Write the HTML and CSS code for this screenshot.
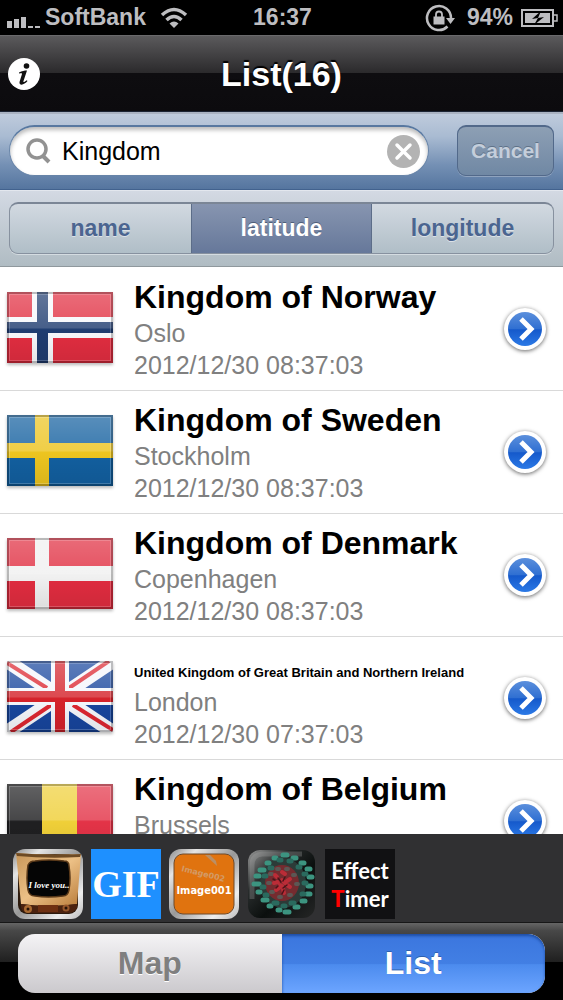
FILE: index.html
```html
<!DOCTYPE html>
<html lang="en">
<head>
<meta charset="utf-8">
<meta name="viewport" content="width=device-width, initial-scale=1">
<title>List(16)</title>
<link rel="stylesheet" href="styles.css">
</head>
<body>
<svg class="defs" width="0" height="0" aria-hidden="true">
  <defs>
    <linearGradient id="gloss" x1="0" y1="0" x2="0" y2="1">
      <stop offset="0" stop-color="#fff" stop-opacity=".3"/>
      <stop offset=".5" stop-color="#fff" stop-opacity=".18"/>
      <stop offset=".53" stop-color="#fff" stop-opacity="0"/>
      <stop offset=".54" stop-color="#000" stop-opacity="0"/>
      <stop offset="1" stop-color="#000" stop-opacity=".08"/>
    </linearGradient>
    <g id="flag-shine">
      <rect width="106" height="71" fill="url(#gloss)"/>
      <rect x="2.500" y="2.500" width="101" height="66" fill="none" stroke="#fff" stroke-opacity=".2"/>
      <rect x="1" y="1" width="104" height="69" fill="none" stroke="#000" stroke-opacity=".24" stroke-width="2"/>
    </g>
    <linearGradient id="blue" x1="0" y1="0" x2="0" y2="1">
      <stop offset="0" stop-color="#5b8fdc"/>
      <stop offset=".5" stop-color="#2f6fd2"/>
      <stop offset=".52" stop-color="#1559cb"/>
      <stop offset="1" stop-color="#2b79e6"/>
    </linearGradient>
    <g id="disclosure">
      <circle cx="24" cy="24" r="21" fill="#fff"/>
      <circle cx="24" cy="24" r="17" fill="url(#blue)"/>
      <path d="M20 14l10 10-10 10" fill="none" stroke="#fff" stroke-width="5"/>
    </g>
  </defs>
</svg>

<header>
  <div class="status">
    <div class="status-side">
      <svg width="34" height="12" viewBox="0 0 34 12" fill="#bdbdc0" aria-hidden="true"><path d="M0 5h5v7H0zM7 3h5v9H7zM14 1h5v11h-5zM21 10h5v2h-5zM28 10h5v2h-5z"/></svg>
      <span>SoftBank</span>
      <svg class="wifi" width="28" height="21" viewBox="0 0 28 21" aria-hidden="true"><g fill="none" stroke="#bdbdc0" stroke-width="3.500"><path d="M2 8q12-11 24 0"/><path d="M6.500 13q7.500-7 15 0"/></g><path d="M9.500 16.500q4.500-4 9 0L14 21z" fill="#bdbdc0"/></svg>
    </div>
    <time>16:37</time>
    <div class="status-side status-end">
      <svg width="30" height="28" viewBox="0 0 30 28" aria-hidden="true"><path d="M22.500 22.500A12 12 0 1 1 26 14" fill="none" stroke="#bdbdc0" stroke-width="2.500"/><path d="M21 14h9l-4.500 6z" fill="#bdbdc0"/><path d="M8.500 12.500h11v8h-11z" fill="#bdbdc0"/><path d="M11 13v-2.500a3 3 0 0 1 6 0V13" fill="none" stroke="#bdbdc0" stroke-width="1.800"/></svg>
      <span>94%</span>
      <svg width="37" height="18" viewBox="0 0 37 18" aria-hidden="true"><rect x="1" y="1" width="31" height="16" fill="none" stroke="#bdbdc0" stroke-width="2"/><path d="M33 6h3v6h-3" fill="none" stroke="#bdbdc0" stroke-width="1.500"/><path d="M4 4h25v10H4z" fill="#bdbdc0"/><path d="M20 2l-9 8 6-1-4 7 10-8-6 1z" fill="#000"/></svg>
    </div>
  </div>
  <div class="navbar">
    <button class="info" aria-label="Info"><svg width="32" height="32" viewBox="0 0 32 32"><circle cx="16" cy="16" r="16" fill="#fff"/><circle cx="18.500" cy="8" r="2.800" fill="#111"/><path d="M11 14.500c3-1.500 5.500-2 8-2l-3.500 10.500c-.5 1.500.7 1.600 3.200-.7l.8.800c-3 4-8.500 5-8 1l2.500-8c.3-1.200-1-1-3-.5z" fill="#111"/></svg></button>
    <h1>List(16)</h1>
  </div>
  <form class="searchbar">
    <div class="search-field">
      <svg width="25" height="26" viewBox="0 0 25 26" aria-hidden="true"><circle cx="11" cy="11" r="9" fill="none" stroke="#929292" stroke-width="3.500"/><path d="M17 18l6 6" stroke="#929292" stroke-width="4"/></svg>
      <input type="text" value="Kingdom" aria-label="Search">
      <button class="clear" type="button" aria-label="Clear"><svg width="33" height="33" viewBox="0 0 33 33"><circle cx="16.500" cy="16.500" r="16.500" fill="#b3b3b3"/><path d="M10 10l13 13M23 10L10 23" stroke="#fff" stroke-width="3.500" stroke-linecap="round"/></svg></button>
    </div>
    <button class="cancel" type="button">Cancel</button>
  </form>
  <div class="scopebar">
    <div class="scopes">
      <button>name</button>
      <button class="selected" aria-pressed="true">latitude</button>
      <button>longitude</button>
    </div>
  </div>
</header>

<main>
  <ul class="countries">
    <li>
      <svg class="flag" viewBox="0 0 106 71" role="img" aria-label="Norway"><path fill="#e12d40" d="M0 0h106v71H0z"/><path fill="#f6f7fb" d="M25 0h21v71H25zM0 25h106v21H0z"/><path fill="#1f3c70" d="M30 0h11v71H30zM0 30h106v11H0z"/><use href="#flag-shine"/></svg>
      <div class="details"><h2>Kingdom of Norway</h2><p>Oslo</p><p>2012/12/30 08:37:03</p></div>
      <button class="more" aria-label="Norway details"><svg width="48" height="48"><use href="#disclosure"/></svg></button>
    </li>
    <li>
      <svg class="flag" viewBox="0 0 106 71" role="img" aria-label="Sweden"><path fill="#125f9f" d="M0 0h106v71H0z"/><path fill="#ecc41f" d="M28 0h14v71H28zM0 28h106v15H0z"/><use href="#flag-shine"/></svg>
      <div class="details"><h2>Kingdom of Sweden</h2><p>Stockholm</p><p>2012/12/30 08:37:03</p></div>
      <button class="more" aria-label="Sweden details"><svg width="48" height="48"><use href="#disclosure"/></svg></button>
    </li>
    <li>
      <svg class="flag" viewBox="0 0 106 71" role="img" aria-label="Denmark"><path fill="#e02c3f" d="M0 0h106v71H0z"/><path fill="#f0f0f0" d="M28 0h14v71H28zM0 28h106v15H0z"/><use href="#flag-shine"/></svg>
      <div class="details"><h2>Kingdom of Denmark</h2><p>Copenhagen</p><p>2012/12/30 08:37:03</p></div>
      <button class="more" aria-label="Denmark details"><svg width="48" height="48"><use href="#disclosure"/></svg></button>
    </li>
    <li>
      <svg class="flag" viewBox="0 0 106 71" role="img" aria-label="United Kingdom"><path fill="#17459d" d="M0 0h106v71H0z"/><path d="M0 0l106 71M106 0L0 71" stroke="#f4f6fb" stroke-width="14"/><path d="M0 2l40 25M102 0L62 27M4 71l40-27M106 69L66 44" stroke="#dc2630" stroke-width="4"/><path fill="#f4f6fb" d="M44 0h18v71H44zM0 27h106v17H0z"/><path fill="#d5222a" d="M48 0h10v71H48zM0 30h106v11H0z"/><use href="#flag-shine"/></svg>
      <div class="details"><h2><span class="long">United Kingdom of Great Britain and Northern Ireland</span></h2><p>London</p><p>2012/12/30 07:37:03</p></div>
      <button class="more" aria-label="United Kingdom details"><svg width="48" height="48"><use href="#disclosure"/></svg></button>
    </li>
    <li>
      <svg class="flag" viewBox="0 0 106 71" role="img" aria-label="Belgium"><path fill="#1f1f21" d="M0 0h35v71H0z"/><path fill="#efcf38" d="M35 0h35v71H35z"/><path fill="#e33347" d="M70 0h36v71H70z"/><use href="#flag-shine"/></svg>
      <div class="details"><h2>Kingdom of Belgium</h2><p>Brussels</p></div>
      <button class="more" aria-label="Belgium details"><svg width="48" height="48"><use href="#disclosure"/></svg></button>
    </li>
  </ul>
</main>

<footer>
  <div class="apps">
    <a href="#tv" aria-label="I love you"><svg width="70" height="70" viewBox="0 0 70 70">
      <defs>
        <linearGradient id="steel" x1="0" y1="0" x2="1" y2="1"><stop offset="0" stop-color="#888"/><stop offset=".2" stop-color="#e5e5e5"/><stop offset=".5" stop-color="#999"/><stop offset=".8" stop-color="#eee"/><stop offset="1" stop-color="#bbb"/></linearGradient>
        <linearGradient id="wood" x1="0" y1="0" x2="1" y2="1"><stop offset="0" stop-color="#c79659"/><stop offset=".5" stop-color="#ecc086"/><stop offset="1" stop-color="#b97c3a"/></linearGradient>
      </defs>
      <rect width="70" height="70" rx="12" fill="url(#steel)"/>
      <rect x="5" y="5" width="60" height="60" rx="9" fill="#2c1a0d"/>
      <path d="M3 4q32 3 65 1l-4 50q-28 4-56 0z" fill="url(#wood)"/>
      <path d="M3 4q32 3 65 1l-1 3q-32 2-63-1z" fill="#6d4a24"/>
      <path d="M15 16q2-4 7-4 14-2 29 0 5 0 5 5 2 12 0 24-1 6-6 6-15 2-28 0-6 0-7-6-2-12 0-25z" fill="#050505" stroke="#5a3919" stroke-width="1.500"/>
      <path d="M8 55q28 4 56 0v4q-3 5-9 5H17q-8 0-9-6z" fill="#4b220f"/>
      <path d="M25 56h20v7H25z" fill="#6e3012"/><circle cx="15" cy="60" r="4" fill="#a86a32"/><circle cx="53" cy="59" r="3.500" fill="#95562a"/><circle cx="15" cy="60" r="1.500" fill="#241108"/><circle cx="53" cy="59" r="1.500" fill="#241108"/>
      <text class="tv-text" x="36" y="39">I love you..</text>
    </svg></a>
    <a href="#gif" class="gif">GIF</a>
    <a href="#image" aria-label="Image001"><svg width="70" height="70" viewBox="0 0 70 70">
      <rect width="70" height="70" rx="12" fill="url(#steel)"/>
      <rect x="5" y="5" width="60" height="60" rx="9" fill="#e0730f" stroke="#6e4a2a"/>
      <path d="M36 6l12 11-1-5-6-6z" fill="#b98f66"/>
      <text class="image-back" x="12" y="22" transform="rotate(14 12 22)">Image002</text>
      <text class="image-front" x="35" y="45">Image001</text>
    </svg></a>
    <a href="#virus" aria-label="Virus"><svg width="70" height="70" viewBox="0 0 70 70">
      <defs><linearGradient id="glass" x1="0" y1="0" x2="1" y2="1"><stop offset="0" stop-color="#999"/><stop offset=".3" stop-color="#292d2d"/><stop offset=".6" stop-color="#0b0f0e"/><stop offset="1" stop-color="#252626"/></linearGradient></defs>
      <rect x="1" y="1" width="67" height="68" rx="12" fill="url(#glass)"/>
      <path d="M5 50V16q0-10 10-11h40" fill="none" stroke="#bbb" stroke-opacity=".25" stroke-width="5"/>
      <ellipse cx="36" cy="34" rx="23" ry="25" fill="#2c3b38"/>
      <ellipse cx="35" cy="34" rx="17" ry="18" fill="#752b2f"/>
      <g fill="none" stroke-linecap="round">
        <path d="M36 6h4M27 9h2M46 9h3M20 14h2M54 14h3M13 21h4M60 20h3M9 27h3M62 28h3M7 35h5M61 37h3M11 43h2M60 45h3M16 51h4M55 52h3M22 57h2M48 58h3M31 61h2M38 63h4" stroke="#3c9480" stroke-width="5"/>
        <path d="M32 11h2M42 12h2M51 18h2M17 27h2M57 25h2M15 38h2M57 34h2M18 46h2M55 45h2M27 54h3M44 54h3M36 57h2M23 19h2" stroke="#2a6a5e" stroke-width="5"/>
        <path d="M23 25h2M30 20h2M39 20h2M46 26h2M21 34h2M49 35h2M24 43h2M32 48h2M42 46h2" stroke="#5c5754" stroke-width="4"/>
        <path d="M28 26l2 2M35 23l3 2M43 30l-3 2M27 34l4-1M35 31l3 3M43 38l-3-2M29 41l3-2M36 40l1 4M33 36l2 1" stroke="#bb2c37" stroke-width="4"/>
        <path d="M31 29l3 4M38 28l-2 4M40 36l-4 3M31 37l-2 2M35 45l2-4M26 30l2 1" stroke="#4d1218" stroke-width="1.500"/>
      </g>
    </svg></a>
    <a href="#timer" class="timer"><span>Effect</span><span><b>T</b>imer</span></a>
  </div>
  <div class="toolbar">
    <div class="tabs">
      <button>Map</button>
      <button class="active" aria-pressed="true">List</button>
    </div>
  </div>
</footer>
</body>
</html>
```

FILE: styles.css
```css
* { box-sizing: border-box; }

body {
  margin: 0;
  height: 100vh;
  display: flex;
  flex-direction: column;
  overflow: hidden;
  background: #fff;
  font-family: "Liberation Sans", Arial, sans-serif;
}

.defs { position: absolute; }
svg { display: block; flex: none; }

button {
  margin: 0;
  padding: 0;
  border: 0;
  background: none;
  font: inherit;
  cursor: pointer;
}

header, footer { flex: none; }

.status {
  display: grid;
  grid-template-columns: 1fr auto 1fr;
  align-items: center;
  height: 35px;
  padding: 0 5px 0 7px;
  background: #000;
  color: #bdbdc0;
  font-size: 23px;
  font-weight: bold;
}

.status-side { display: flex; align-items: center; gap: 4px; }
.status-side > svg:first-child { margin-top: 8px; }
.wifi { margin-left: 10px; }
.status-end { justify-content: flex-end; gap: 8px; }
.status-end > svg:first-child { margin: 0 4px 0 0; }

.navbar {
  display: grid;
  grid-template-columns: 1fr auto 1fr;
  align-items: center;
  height: 77px;
  padding: 0 8px;
  border-top: 1px solid #6a6a6c;
  border-bottom: 1px solid #1c2433;
  background: linear-gradient(#5b5a5c, #2a292b 50%, #0e0d10 50%, #0c0b0e);
}

.info { width: 32px; }

h1 {
  margin: 0;
  color: #fff;
  font-size: 34px;
  line-height: 40px;
  text-shadow: 0 -2px 1px #000;
}

.searchbar {
  display: flex;
  gap: 28px;
  height: 78px;
  padding: 11px 9px 13px;
  border-top: 2px solid #a9b2c1;
  border-bottom: 1px solid #42628e;
  background: linear-gradient(#bfcbdc, #a9bbd2 30%, #7490b4 68%, #55759f);
}

.search-field {
  flex: 1;
  min-width: 0;
  display: flex;
  align-items: center;
  gap: 11px;
  padding: 0 8px 0 16px;
  border: 1px solid #6784a8;
  border-top: 2px solid #5878a0;
  border-radius: 26px;
  background: #fff;
  box-shadow: inset 0 3px 4px #bbb;
}

.search-field input {
  flex: 1;
  min-width: 0;
  padding: 0;
  border: 0;
  outline: 0;
  background: none;
  color: #000;
  font: 25px/32px "Liberation Sans", Arial, sans-serif;
}

.cancel {
  width: 97px;
  border: 1px solid #52698a;
  border-top-width: 2px;
  border-radius: 9px;
  background: linear-gradient(#8d9fb4, #7088a4);
  box-shadow: 0 1px 0 #8fa3be;
  color: #c4cedb;
  font-size: 21px;
  font-weight: bold;
  text-shadow: 0 -1px 0 #5f7288;
}

.scopebar {
  height: 77px;
  padding: 11px 9px 13px;
  border-top: 1px solid #e3e7ee;
  border-bottom: 1px solid #8f989d;
  background: linear-gradient(#d3d9e3, #b0bcc3);
}

.scopes {
  display: grid;
  grid-template-columns: repeat(3, 1fr);
  height: 52px;
  overflow: hidden;
  border: 1px solid #87919f;
  border-top: 2px solid #7b8696;
  border-radius: 9px;
  background: linear-gradient(#d2d9e1, #b0bec7);
  box-shadow: 0 1px 0 #d5dce1;
}

.scopes button {
  color: #4b6590;
  font-size: 23px;
  font-weight: bold;
  text-shadow: 0 1px 0 #dce2e8;
}

.scopes .selected {
  border: solid #5c6d88;
  border-width: 0 1px;
  background: linear-gradient(#8795b0, #66789a);
  color: #fff;
  text-shadow: 0 -1px 0 #4e5e78;
}

main { flex: 1; min-height: 0; padding-top: 1px; overflow: hidden; }

.countries { margin: 0; padding: 0; list-style: none; }

.countries li {
  display: flex;
  height: 123px;
  padding: 11px 14px 0 7px;
  border-bottom: 1px solid #d9d9d9;
}

.flag {
  width: 106px;
  height: 71px;
  margin: 13px 21px 0 0;
  box-shadow: 0 2px 3px #bbb;
}

.details { flex: 1; min-width: 0; white-space: nowrap; }

h2 {
  height: 38px;
  margin: 0;
  font-size: 32px;
  line-height: 36px;
}

.long { font-size: 13px; }

.details p {
  margin: 0;
  color: #808080;
  font-size: 25px;
  line-height: 32px;
}

.more {
  align-self: flex-start;
  margin-top: 26px;
  border-radius: 50%;
}

.more svg { filter: drop-shadow(0 1px 2px #666); }

.apps {
  display: flex;
  gap: 8px;
  height: 88px;
  padding: 15px 13px 0;
  background: #303032;
}

.apps a {
  display: block;
  width: 70px;
  height: 70px;
  color: #fff;
  text-decoration: none;
}

.tv-text {
  fill: #fff;
  font: italic bold 9px "Liberation Serif", serif;
  text-anchor: middle;
}

.image-front {
  fill: #fff;
  font: bold 11px "DejaVu Sans Condensed", "DejaVu Sans", sans-serif;
  text-anchor: middle;
}

.image-back {
  fill: #d39a65;
  font: bold 8px "DejaVu Sans", sans-serif;
}

.apps .gif {
  background: #1e90ff;
  font: bold 38px/70px "Liberation Serif", serif;
  text-align: center;
}

.apps .timer {
  padding: 8px 0;
  background: #111113;
  font: bold 22px/28px Lato, sans-serif;
  text-align: center;
}

.timer span { display: block; }
.timer b { color: #f00; }

.toolbar {
  height: 78px;
  padding: 11px 18px 8px;
  border-top: 1px solid #171717;
  background: linear-gradient(#656565, #484848 10%, #202020 50%, #000 51%);
}

.tabs {
  display: grid;
  grid-template-columns: 1fr 1fr;
  height: 59px;
  overflow: hidden;
  border-radius: 17px;
  background: linear-gradient(#f4f3f5, #cbc9cd);
}

.tabs button {
  color: #7f7f7f;
  font-size: 32px;
  font-weight: bold;
  text-shadow: 0 1px 0 #fff;
}

.tabs .active {
  border-radius: 0 17px 17px 0;
  background: linear-gradient(#3b76de, #427fe4 50%, #4c8bee 52%, #6ca5ff);
  box-shadow: inset 0 2px 3px #1d4da3;
  color: #fff;
  text-shadow: 0 -1px 0 #2c5fae;
}
```
